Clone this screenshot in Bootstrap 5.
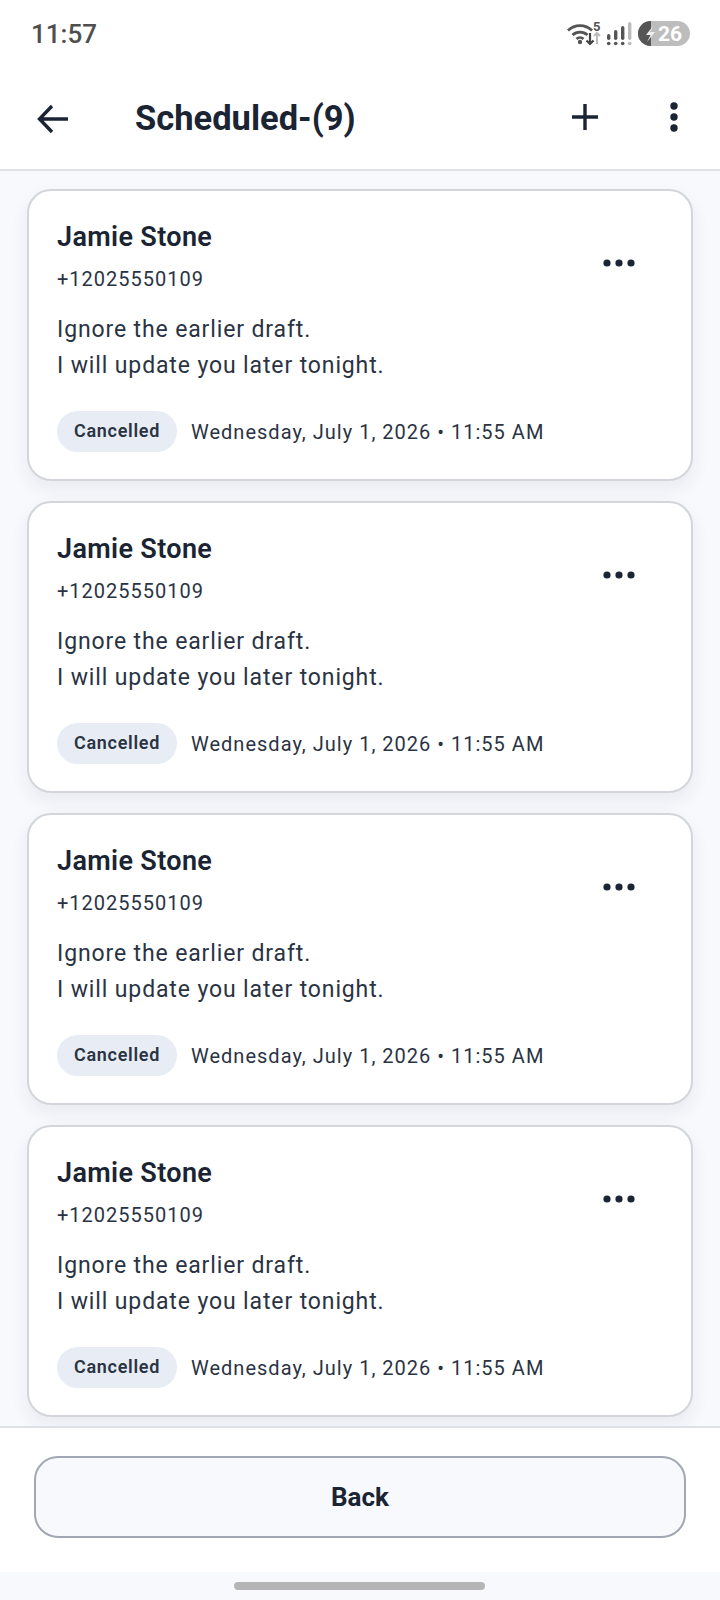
<!DOCTYPE html>
<html lang="en">

<head>
    <title>Scheduled</title>
    <meta charset="utf-8">
    <meta name="viewport" content="width=device-width, initial-scale=1">
    <link href="https://cdn.jsdelivr.net/npm/bootstrap@5.3.2/dist/css/bootstrap.min.css" rel="stylesheet">

    <style>
        body {
            font-family: Roboto, "Liberation Sans", sans-serif;
            color: #1a2433;
            background: #f8f9fd;
            height: 1600px;
            overflow: hidden;
        }

        .status-row {
            height: 68px;
            padding: 0 30px 0 31px;
            background: #fff;
        }

        .status-time {
            font-size: 26px;
            font-weight: 500;
            color: #4f4f4f;
        }

        .top-bar {
            height: 103px;
            padding: 0 36px 0 37px;
            background: #fff;
            border-bottom: 2px solid #dfe1e6;
        }

        .top-title {
            font-size: 34.500px;
            font-weight: 700;
            margin-left: 66px;
        }

        .plus-icon {
            margin-bottom: 3px;
        }

        .more-icon {
            margin-left: 68px;
            margin-right: 3px;
            margin-bottom: 3px;
        }

        .sched-list {
            height: 1255px;
            padding: 18px 27px 0;
            gap: 20px;
            overflow: hidden;
        }

        .sched-card {
            flex: 0 0 292px;
            padding: 29px 28px 0;
            background: #fff;
            border: 2px solid #d2d5da;
            border-radius: 24px;
            box-shadow: 0 8px 18px rgba(30, 40, 70, .07);
            position: relative;
        }

        .sched-name {
            font-size: 27px;
            font-weight: 600;
            letter-spacing: .35px;
            line-height: 34px;
        }

        .sched-phone {
            font-size: 20px;
            letter-spacing: 1px;
            line-height: 26px;
            margin-top: 12px;
            color: #2a3344;
        }

        .sched-msg {
            font-size: 23px;
            letter-spacing: .87px;
            line-height: 36px;
            margin-top: 20px;
            color: #2a3344;
        }

        .sched-meta {
            margin-top: 27px;
            gap: 14px;
        }

        .state-pill {
            width: 120px;
            height: 41px;
            background: #e8ecf5;
            border-radius: 21px;
            font-size: 18px;
            font-weight: 600;
            letter-spacing: .7px;
            padding-bottom: 2px;
            color: #2a3344;
        }

        .sched-when {
            font-size: 20px;
            letter-spacing: 1.01px;
            color: #2a3344;
        }

        .card-more {
            position: absolute;
            top: 68px;
            right: 56px;
        }

        .foot-bar {
            height: 146px;
            padding: 28px 34px 0;
            background: #fff;
            border-top: 2px solid #dfe1e6;
        }

        .back-btn {
            width: 652px;
            height: 82px;
            background: #f8f9fd;
            border: 2px solid #a1a7b5;
            border-radius: 24px;
            font-size: 26px;
            font-weight: 700;
            color: #1a2433;
        }

        .nav-strip {
            height: 28px;
        }

        .nav-pill {
            width: 251px;
            height: 8px;
            background: #b5b5b5;
            border-radius: 4px;
            margin-top: 10px;
            margin-left: -2px;
        }
    </style>
</head>

<body>
    <!-- Status bar -->
    <div class="status-row d-flex align-items-center justify-content-between">
        <span class="status-time">11:57</span>
        <svg width="124" height="38" viewBox="0 -6 124 38">
            <g fill="none" stroke="#555" stroke-width="2.800">
                <path d="M2 9.500a17 17 0 0 1 24 0" />
                <path d="M6.500 14a11 11 0 0 1 15 0" />
                <path d="M10.500 18a5 5 0 0 1 7 0" />
            </g>
            <circle cx="14" cy="21" r="2.200" fill="#555" />
            <path d="M24 12v11m-3.500-3.500L24 23l3.500-3.500" fill="none" stroke="#444" stroke-width="2.200" />
            <path d="M31 23V12m-3 3l3-3 3 3" fill="none" stroke="#bbb" stroke-width="2" />
            <text x="27" y="10" font-family="Roboto" font-size="13" font-weight="700" fill="#555">5</text>
            <g fill="#555">
                <rect x="41" y="13" width="3.400" height="6" rx="1.700" />
                <rect x="48" y="9" width="3.400" height="10" rx="1.700" />
                <rect x="55" y="5" width="3.400" height="14" rx="1.700" />
                <circle cx="42.700" cy="22.500" r="1.800" />
                <circle cx="49.700" cy="22.500" r="1.800" />
                <circle cx="56.700" cy="22.500" r="1.800" />
            </g>
            <rect x="62" y="1" width="3.400" height="18" rx="1.700" fill="#bbb" />
            <circle cx="63.700" cy="22.500" r="1.800" fill="#bbb" />
            <rect x="72" y="0" width="52" height="25" rx="12.500" fill="#bdbdbd" />
            <path d="M84.500 0H85v25h-.5a12.500 12.500 0 0 1 0-25z" fill="#555" />
            <path d="M87 5l-7 9h4.500L81 21l8-10h-4.500L87 5z" fill="#eee" />
            <text x="92" y="20" font-family="Roboto" font-size="21" font-weight="700" fill="#fff">26</text>
        </svg>
    </div>

    <!-- Top bar -->
    <div class="top-bar d-flex align-items-center">
        <svg width="32" height="30" viewBox="0 0 32 30" fill="none" stroke="#1a2433" stroke-width="3.400">
            <path d="M31 15H3M15 2L2.500 15 15 28" />
        </svg>
        <span class="top-title">Scheduled-(9)</span>
        <svg class="plus-icon ms-auto" width="28" height="28" viewBox="0 0 28 28" stroke="#1a2433" stroke-width="3.400">
            <path d="M1 14h26M14 1v26" />
        </svg>
        <svg class="more-icon" width="14" height="32" viewBox="0 0 14 32" fill="#1a2433">
            <circle cx="7" cy="5" r="3.700" />
            <circle cx="7" cy="16" r="3.700" />
            <circle cx="7" cy="27" r="3.700" />
        </svg>
    </div>

    <!-- Cards -->
    <div class="sched-list d-flex flex-column" id="list"></div>

    <!-- Back -->
    <div class="foot-bar">
        <button class="btn back-btn" type="button">Back</button>
    </div>
    <div class="nav-strip d-flex justify-content-center">
        <div class="nav-pill"></div>
    </div>

    <script>
        var html = "";
        for (var i = 0; i < 4; i++) {
            html += `
            <div class="sched-card">
                <div class="sched-name">Jamie Stone</div>
                <div class="sched-phone">+12025550109</div>
                <div class="sched-msg">Ignore the earlier draft.<br>I will update you later tonight.</div>
                <div class="sched-meta d-flex align-items-center">
                    <span class="state-pill d-flex align-items-center justify-content-center">Cancelled</span>
                    <span class="sched-when">Wednesday, July 1, 2026 • 11:55 AM</span>
                </div>
                <svg class="card-more" width="32" height="8" viewBox="0 0 32 8" fill="#1a2433">
                    <circle cx="4" cy="4" r="3.600" />
                    <circle cx="16" cy="4" r="3.600" />
                    <circle cx="28" cy="4" r="3.600" />
                </svg>
            </div>`;
        }
        document.getElementById("list").innerHTML = html;
    </script>
    <script src="https://cdn.jsdelivr.net/npm/bootstrap@5.3.2/dist/js/bootstrap.bundle.min.js"></script>
</body>

</html>
